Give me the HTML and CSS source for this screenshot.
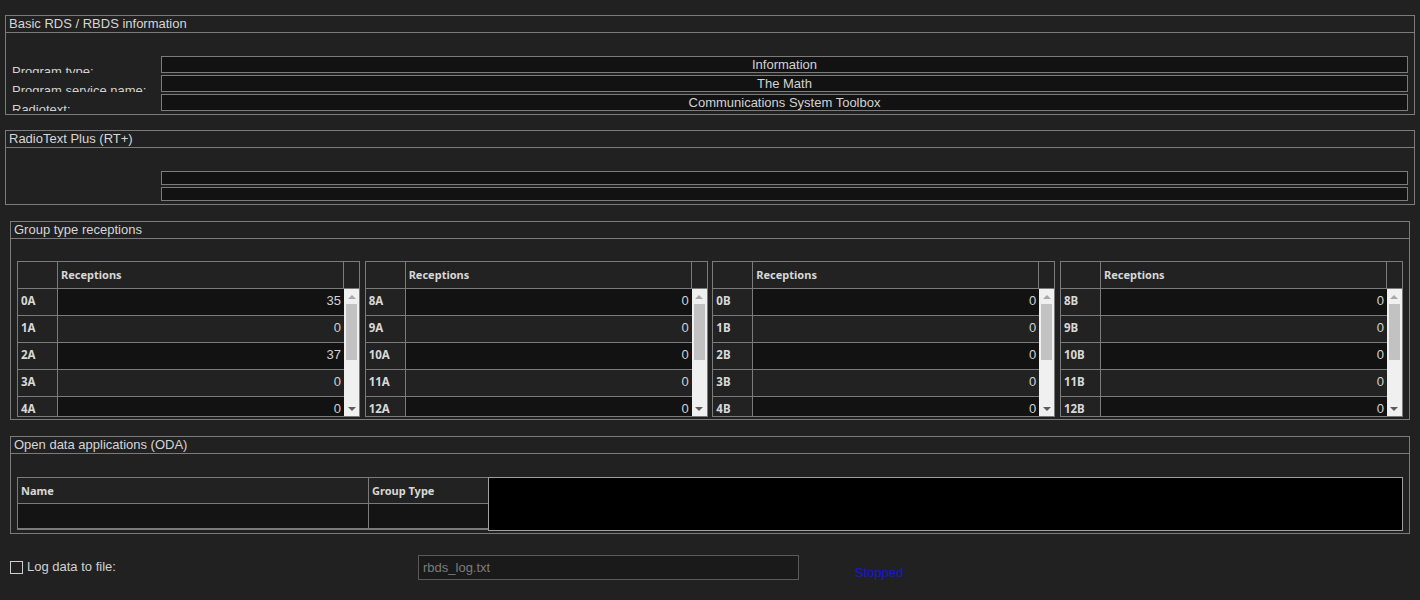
FILE: index.html
```html
<!DOCTYPE html>
<html>
<head>
<meta charset="utf-8">
<title>RBDS</title>
<link rel="stylesheet" href="styles.css">
</head>
<body>
<div class="app">
  <section class="panel panel-wide">
    <div class="panel-title">Basic RDS / RBDS information</div>
    <div class="panel-body info-grid">
      <div class="lbl">Program type:</div><div class="field">Information</div>
      <div class="lbl">Program service name:</div><div class="field">The Math</div>
      <div class="lbl">Radiotext:</div><div class="field">Communications System Toolbox</div>
    </div>
  </section>

  <section class="panel panel-wide gap15">
    <div class="panel-title">RadioText Plus (RT+)</div>
    <div class="panel-body info-grid rt">
      <div class="lbl"></div><div class="field"></div>
      <div class="lbl"></div><div class="field"></div>
    </div>
  </section>

  <section class="panel panel-narrow gap16">
    <div class="panel-title">Group type receptions</div>
    <div class="panel-body tables">
      <div class="gt">
        <div class="gt-head"><div class="hc"></div><div class="hc">Receptions</div><div class="hc last"></div></div>
        <div class="gt-body">
          <div class="gt-rows">
            <div class="gt-row"><div class="gt-key">0A</div><div class="gt-val">35</div></div>
            <div class="gt-row"><div class="gt-key">1A</div><div class="gt-val">0</div></div>
            <div class="gt-row"><div class="gt-key">2A</div><div class="gt-val">37</div></div>
            <div class="gt-row"><div class="gt-key">3A</div><div class="gt-val">0</div></div>
            <div class="gt-row"><div class="gt-key">4A</div><div class="gt-val">0</div></div>
          </div>
          <div class="scroll"><div class="arr up"></div><div class="thumb"></div><div class="spacer"></div><div class="arr down"></div></div>
        </div>
      </div>
      <div class="gt">
        <div class="gt-head"><div class="hc"></div><div class="hc">Receptions</div><div class="hc last"></div></div>
        <div class="gt-body">
          <div class="gt-rows">
            <div class="gt-row"><div class="gt-key">8A</div><div class="gt-val">0</div></div>
            <div class="gt-row"><div class="gt-key">9A</div><div class="gt-val">0</div></div>
            <div class="gt-row"><div class="gt-key">10A</div><div class="gt-val">0</div></div>
            <div class="gt-row"><div class="gt-key">11A</div><div class="gt-val">0</div></div>
            <div class="gt-row"><div class="gt-key">12A</div><div class="gt-val">0</div></div>
          </div>
          <div class="scroll"><div class="arr up"></div><div class="thumb"></div><div class="spacer"></div><div class="arr down"></div></div>
        </div>
      </div>
      <div class="gt">
        <div class="gt-head"><div class="hc"></div><div class="hc">Receptions</div><div class="hc last"></div></div>
        <div class="gt-body">
          <div class="gt-rows">
            <div class="gt-row"><div class="gt-key">0B</div><div class="gt-val">0</div></div>
            <div class="gt-row"><div class="gt-key">1B</div><div class="gt-val">0</div></div>
            <div class="gt-row"><div class="gt-key">2B</div><div class="gt-val">0</div></div>
            <div class="gt-row"><div class="gt-key">3B</div><div class="gt-val">0</div></div>
            <div class="gt-row"><div class="gt-key">4B</div><div class="gt-val">0</div></div>
          </div>
          <div class="scroll"><div class="arr up"></div><div class="thumb"></div><div class="spacer"></div><div class="arr down"></div></div>
        </div>
      </div>
      <div class="gt">
        <div class="gt-head"><div class="hc"></div><div class="hc">Receptions</div><div class="hc last"></div></div>
        <div class="gt-body">
          <div class="gt-rows">
            <div class="gt-row"><div class="gt-key">8B</div><div class="gt-val">0</div></div>
            <div class="gt-row"><div class="gt-key">9B</div><div class="gt-val">0</div></div>
            <div class="gt-row"><div class="gt-key">10B</div><div class="gt-val">0</div></div>
            <div class="gt-row"><div class="gt-key">11B</div><div class="gt-val">0</div></div>
            <div class="gt-row"><div class="gt-key">12B</div><div class="gt-val">0</div></div>
          </div>
          <div class="scroll"><div class="arr up"></div><div class="thumb"></div><div class="spacer"></div><div class="arr down"></div></div>
        </div>
      </div>
    </div>
  </section>

  <section class="panel panel-narrow gap16">
    <div class="panel-title">Open data applications (ODA)</div>
    <div class="panel-body oda">
      <div class="oda-table">
        <div class="oda-row head"><div class="oc name">Name</div><div class="oc gtype">Group Type</div></div>
        <div class="oda-row data"><div class="oc name"></div><div class="oc gtype"></div></div>
      </div>
      <div class="oda-view"></div>
    </div>
  </section>

  <div class="logrow">
    <div class="chk"></div>
    <div class="loglabel">Log data to file:</div>
    <div class="logfield">rbds_log.txt</div>
    <div class="status">Stopped</div>
  </div>
</div>
</body>
</html>
```

FILE: styles.css
```css
html, body {
  margin: 0;
  padding: 0;
}
body {
  background: #212121;
  font-family: "Liberation Sans", Arial, sans-serif;
  font-size: 13px;
  color: #d2d2d2;
  width: 1420px;
  height: 600px;
  overflow: hidden;
}
.app {
  padding-top: 15px;
  display: flex;
  flex-direction: column;
}
.panel {
  border: 1px solid #7b7b7b;
  box-sizing: border-box;
  flex: none;
}
.panel-wide {
  margin-left: 5px;
  width: 1410px;
}
.panel-narrow {
  margin-left: 10px;
  width: 1400px;
}
.gap15 { margin-top: 15px; }
.gap16 { margin-top: 16px; }

.panel-title {
  height: 16px;
  line-height: 16px;
  border-bottom: 1px solid #7b7b7b;
  padding-left: 3px;
  color: #d6d6d6;
  white-space: nowrap;
}

/* Basic info */
.info-grid {
  display: grid;
  grid-template-columns: 149px 1fr;
  grid-auto-rows: 17px;
  row-gap: 2px;
  padding: 23px 6px 3px 6px;
}
.info-grid.rt {
  grid-auto-rows: 14px;
}
.lbl {
  height: 17px;
  overflow: hidden;
  padding-top: 8px;
  box-sizing: border-box;
  line-height: 15px;
  white-space: nowrap;
  color: #d2d2d2;
}
.field {
  border: 1px solid #7b7b7b;
  background: #121212;
  box-sizing: border-box;
  text-align: center;
  line-height: 15px;
  color: #d2d2d2;
  overflow: hidden;
  white-space: nowrap;
}
.rt .field {
  line-height: 12px;
}

/* Group type tables */
.tables {
  display: flex;
  justify-content: space-between;
  padding: 22px 6px 2px 6px;
}
.gt {
  width: 343px;
  height: 156px;
  border: 1px solid #7b7b7b;
  box-sizing: border-box;
  display: flex;
  flex-direction: column;
  overflow: hidden;
  background: #222222;
}
.gt-head {
  display: grid;
  grid-template-columns: 40px 1fr 15px;
  height: 27px;
  border-bottom: 1px solid #7b7b7b;
  box-sizing: border-box;
  flex: none;
}
.hc {
  border-right: 1px solid #7b7b7b;
  font-family: "Noto Sans", sans-serif;
  font-weight: bold;
  font-size: 11px;
  line-height: 26px;
  padding-left: 3px;
  color: #d8d8d8;
  white-space: nowrap;
}
.hc.last {
  border-right: none;
}
.gt-body {
  display: flex;
  flex: 1;
  min-height: 0;
  overflow: hidden;
}
.gt-rows {
  flex: 1;
  min-width: 0;
}
.gt-row {
  display: grid;
  grid-template-columns: 40px 1fr;
  height: 27px;
  border-bottom: 1px solid #7b7b7b;
  box-sizing: border-box;
}
.gt-key {
  border-right: 1px solid #7b7b7b;
  background: #222222;
  font-family: "Noto Sans", sans-serif;
  font-weight: bold;
  font-size: 11.5px;
  line-height: 24px;
  padding-left: 3px;
  color: #d8d8d8;
}
.gt-val {
  text-align: right;
  padding-right: 3px;
  line-height: 24px;
  color: #d2d2d2;
}
.gt-row:nth-child(odd) .gt-val {
  background: #121212;
}
.scroll {
  width: 15px;
  flex: none;
  background: #f0f0f0;
  display: flex;
  flex-direction: column;
  align-items: center;
}
.arr {
  width: 15px;
  height: 15px;
  display: flex;
  align-items: center;
  justify-content: center;
  flex: none;
}
.arr::before {
  content: "";
  width: 0;
  height: 0;
  border-left: 4px solid transparent;
  border-right: 4px solid transparent;
}
.arr.up::before {
  border-bottom: 4px solid #a8a8a8;
}
.arr.down::before {
  border-top: 4px solid #5c5c5c;
}
.thumb {
  width: 11px;
  height: 56px;
  background: #c2c2c2;
  flex: none;
}
.spacer {
  flex: 1;
}

/* ODA */
.oda {
  display: flex;
  align-items: flex-start;
  padding: 23px 6px 2px 6px;
}
.oda-table {
  width: 471px;
  height: 53px;
  border: 1px solid #7b7b7b;
  border-right: none;
  box-sizing: border-box;
  background: #222222;
  flex: none;
}
.oda-row {
  display: grid;
  grid-template-columns: 351px 1fr;
  height: 25px;
  border-bottom: 1px solid #7b7b7b;
  box-sizing: border-box;
}
.oda-row.head {
  height: 26px;
}
.oda-row.data {
  background: #141414;
}
.oc {
  border-right: 1px solid #7b7b7b;
  font-family: "Noto Sans", sans-serif;
  font-weight: bold;
  font-size: 11px;
  line-height: 25px;
  padding-left: 3px;
  color: #d8d8d8;
}
.oc.gtype {
  border-right: none;
}
.oda-view {
  flex: 1;
  height: 54px;
  border: 1px solid #a0a0a0;
  box-sizing: border-box;
  background: #000000;
}

/* Log row */
.logrow {
  display: flex;
  align-items: center;
  margin-top: 21px;
  height: 25px;
  padding-left: 10px;
}
.chk {
  width: 13px;
  height: 13px;
  border: 1px solid #cfcfcf;
  box-sizing: border-box;
  flex: none;
}
.loglabel {
  margin-left: 4px;
  width: 391px;
  flex: none;
  color: #d2d2d2;
  margin-top: -2px;
}
.logfield {
  width: 381px;
  height: 25px;
  border: 1px solid #5a5a5a;
  box-sizing: border-box;
  background: #1a1a1a;
  color: #7c7c7c;
  padding-left: 4px;
  line-height: 23px;
  flex: none;
}
.status {
  margin-left: 56px;
  color: #1414e6;
  align-self: flex-end;
  line-height: 15px;
}
```
